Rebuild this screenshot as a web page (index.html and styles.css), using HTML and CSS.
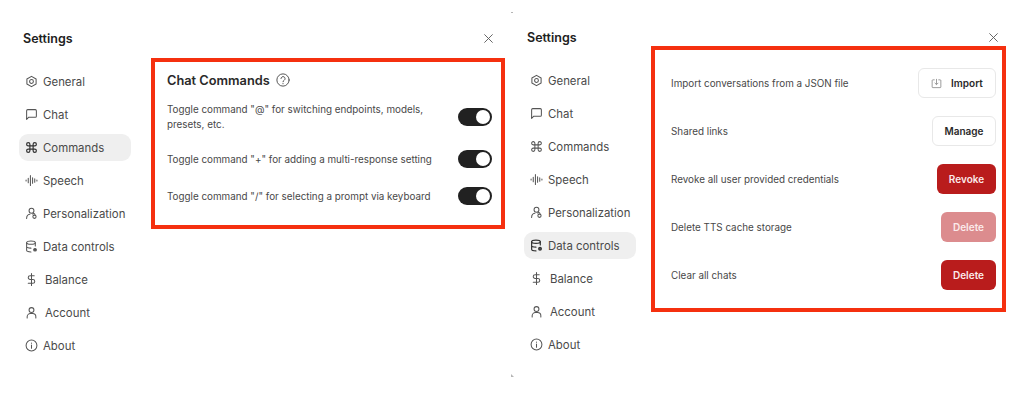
FILE: index.html
```html
<!DOCTYPE html>
<html lang="en">

<head>
    <meta charset="UTF-8">
    <meta name="viewport" content="width=device-width, initial-scale=1.0">
    <title>Settings</title>
    <link rel="stylesheet" href="styles.css">
</head>

<body>
    <svg class="icon-defs" width="0" height="0" aria-hidden="true">
        <symbol id="i-general" viewBox="0 0 24 24"><path d="M12 2.500l8.500 4.900v9.200L12 21.500l-8.500-4.900V7.400z"/><circle cx="12" cy="12" r="3.500"/></symbol>
        <symbol id="i-chat" viewBox="0 0 24 24"><path d="M21 15a2 2 0 0 1-2 2H7l-4 4V5a2 2 0 0 1 2-2h14a2 2 0 0 1 2 2z"/></symbol>
        <symbol id="i-commands" viewBox="0 0 24 24"><path d="M15 6v12a3 3 0 1 0 3-3H6a3 3 0 1 0 3 3V6a3 3 0 1 0-3 3h12a3 3 0 1 0-3-3"/></symbol>
        <symbol id="i-speech" viewBox="0 0 24 24"><path d="M2 11v2M6 8v8M10 3v18M14 7v10M18 9v6M22 11v2"/></symbol>
        <symbol id="i-person" viewBox="0 0 24 24"><circle cx="12" cy="7" r="4.500"/><path d="M3 21c0-4 2.500-7 6-7.500M14 13l2.500-1 2 1.500"/><circle cx="17.500" cy="18" r="3"/></symbol>
        <symbol id="i-data" viewBox="0 0 24 24"><ellipse cx="11" cy="5" rx="8" ry="3"/><path d="M3 5v14c0 1.700 3.500 3 8 3M19 5v6M3 12c0 1.700 3.500 3 8 3"/><circle cx="18.500" cy="18" r="2.500" class="icon-fill"/></symbol>
        <symbol id="i-balance" viewBox="0 0 24 24"><path d="M12 1v22M17 5H9.500a3.500 3.500 0 0 0 0 7h5a3.500 3.500 0 0 1 0 7H6"/></symbol>
        <symbol id="i-account" viewBox="0 0 24 24"><circle cx="12" cy="7.500" r="4.500"/><path d="M4 22v-2a6 6 0 0 1 6-6h4a6 6 0 0 1 6 6v2"/></symbol>
        <symbol id="i-about" viewBox="0 0 24 24"><circle cx="12" cy="12" r="10"/><path d="M12 11v6M12 7.500v.5"/></symbol>
        <symbol id="i-close" viewBox="0 0 24 24"><path d="M3 3l18 18M21 3L3 21"/></symbol>
        <symbol id="i-help" viewBox="0 0 24 24"><circle cx="12" cy="12" r="10.500"/><path d="M8.500 9.500a3.500 3.500 0 1 1 5.500 3c-1.200.8-2 1.300-2 2.500M12 18v.5"/></symbol>
        <symbol id="i-import" viewBox="0 0 24 24"><path d="M8 4H4a1.500 1.500 0 0 0-1.500 1.500v14A1.500 1.500 0 0 0 4 21h16a1.500 1.500 0 0 0 1.500-1.500v-14A1.500 1.500 0 0 0 20 4h-4M12 2v12M8 10.500l4 4 4-4"/></symbol>
    </svg>

    <span class="crop-mark crop-mark-top"></span>
    <span class="crop-mark crop-mark-bottom"></span>

    <div class="page">
        <!-- commands tab -->
        <section class="dialog dialog-commands">
            <div class="dialog-header">
                <h2 class="dialog-title">Settings</h2>
                <svg class="close-icon"><use href="#i-close"/></svg>
            </div>
            <div class="dialog-body">
                <nav class="nav">
                    <a class="nav-item"><svg class="icon"><use href="#i-general"/></svg>General</a>
                    <a class="nav-item"><svg class="icon"><use href="#i-chat"/></svg>Chat</a>
                    <a class="nav-item active"><svg class="icon"><use href="#i-commands"/></svg>Commands</a>
                    <a class="nav-item"><svg class="icon"><use href="#i-speech"/></svg>Speech</a>
                    <a class="nav-item"><svg class="icon"><use href="#i-person"/></svg>Personalization</a>
                    <a class="nav-item"><svg class="icon"><use href="#i-data"/></svg>Data controls</a>
                    <a class="nav-item wide"><svg class="icon"><use href="#i-balance"/></svg>Balance</a>
                    <a class="nav-item wide"><svg class="icon"><use href="#i-account"/></svg>Account</a>
                    <a class="nav-item"><svg class="icon"><use href="#i-about"/></svg>About</a>
                </nav>
                <div class="panel panel-commands">
                    <div class="panel-heading">
                        <h3 class="panel-title">Chat Commands</h3>
                        <svg class="help-icon"><use href="#i-help"/></svg>
                    </div>
                    <div class="toggle-row">
                        <p class="row-text">Toggle command "@" for switching endpoints, models, presets, etc.</p>
                        <span class="toggle"><span class="toggle-knob"></span></span>
                    </div>
                    <div class="toggle-row toggle-row-spaced">
                        <p class="row-text">Toggle command "+" for adding a multi-response setting</p>
                        <span class="toggle"><span class="toggle-knob"></span></span>
                    </div>
                    <div class="toggle-row">
                        <p class="row-text">Toggle command "/" for selecting a prompt via keyboard</p>
                        <span class="toggle"><span class="toggle-knob"></span></span>
                    </div>
                </div>
            </div>
        </section>

        <!-- data controls tab -->
        <section class="dialog dialog-data">
            <div class="dialog-header">
                <h2 class="dialog-title">Settings</h2>
                <svg class="close-icon"><use href="#i-close"/></svg>
            </div>
            <div class="dialog-body">
                <nav class="nav">
                    <a class="nav-item"><svg class="icon"><use href="#i-general"/></svg>General</a>
                    <a class="nav-item"><svg class="icon"><use href="#i-chat"/></svg>Chat</a>
                    <a class="nav-item"><svg class="icon"><use href="#i-commands"/></svg>Commands</a>
                    <a class="nav-item"><svg class="icon"><use href="#i-speech"/></svg>Speech</a>
                    <a class="nav-item"><svg class="icon"><use href="#i-person"/></svg>Personalization</a>
                    <a class="nav-item active"><svg class="icon"><use href="#i-data"/></svg>Data controls</a>
                    <a class="nav-item wide"><svg class="icon"><use href="#i-balance"/></svg>Balance</a>
                    <a class="nav-item wide"><svg class="icon"><use href="#i-account"/></svg>Account</a>
                    <a class="nav-item"><svg class="icon"><use href="#i-about"/></svg>About</a>
                </nav>
                <div class="panel panel-data">
                    <div class="data-row">
                        <p class="row-text">Import conversations from a JSON file</p>
                        <button class="btn btn-outline btn-import"><svg class="btn-icon"><use href="#i-import"/></svg>Import</button>
                    </div>
                    <div class="data-row">
                        <p class="row-text">Shared links</p>
                        <button class="btn btn-outline btn-manage">Manage</button>
                    </div>
                    <div class="data-row">
                        <p class="row-text">Revoke all user provided credentials</p>
                        <button class="btn btn-danger btn-revoke">Revoke</button>
                    </div>
                    <div class="data-row">
                        <p class="row-text">Delete TTS cache storage</p>
                        <button class="btn btn-danger btn-delete" disabled>Delete</button>
                    </div>
                    <div class="data-row">
                        <p class="row-text">Clear all chats</p>
                        <button class="btn btn-danger btn-delete">Delete</button>
                    </div>
                </div>
            </div>
        </section>
    </div>
</body>

</html>
```

FILE: styles.css
```css
html,
body {
    margin: 0;
    overflow: hidden;
    height: 100%;
    width: 100%;
    background-color: #fff;
}

body {
    font-family: "Inter", "Liberation Sans", sans-serif;
    color: #424242;
}

.icon-defs {
    display: block;
}

.crop-mark {
    position: absolute;
    left: 511px;
    width: 3px;
    height: 3px;
    background-color: #b5b5b5;
}

.crop-mark-top {
    top: 12px;
    height: 1px;
    width: 2px;
}

.crop-mark-bottom {
    top: 374px;
    clip-path: polygon(0 0, 100% 100%, 0 100%);
}

.page {
    display: flex;
}

.dialog {
    flex: none;
    box-sizing: border-box;
    width: 505px;
    padding-left: 19px;
}

.dialog-commands {
    padding-top: 29px;
}

.dialog-data {
    padding-top: 28px;
}

.dialog-header {
    display: flex;
    justify-content: space-between;
    align-items: center;
    height: 18px;
    padding-left: 4px;
    padding-right: 11px;
}

.dialog-data .dialog-header {
    padding-left: 3px;
}

.dialog-title {
    margin: 0;
    font-size: 12.5px;
    font-weight: 600;
    color: #212121;
}

.close-icon {
    width: 11px;
    height: 11px;
    fill: none;
    stroke: #5a5a5a;
    stroke-width: 2;
}

.dialog-body {
    display: flex;
    align-items: flex-start;
}

.nav {
    flex: none;
    display: flex;
    flex-direction: column;
    gap: 6px;
    width: 112px;
    padding-top: 21px;
}

.nav-item {
    display: flex;
    align-items: center;
    gap: 5px;
    height: 27px;
    padding-left: 6px;
    border-radius: 9px;
    font-size: 11.4px;
    color: #4a4a4a;
}

.nav-item.wide {
    gap: 7px;
}

.nav-item.active {
    background-color: #efefef;
}

.icon {
    flex: none;
    width: 13px;
    height: 13px;
    fill: none;
    stroke: #555;
    stroke-width: 1.9;
    stroke-linecap: round;
    stroke-linejoin: round;
}

.nav-item.active .icon {
    stroke: #333;
    stroke-width: 2.2;
}

.icon-fill {
    fill: #555;
}

.panel {
    box-sizing: border-box;
    width: 355px;
    border: 4px solid #f5300f;
}

.panel-commands {
    margin-left: 20px;
    margin-top: 11px;
    padding: 9px 9px 20px 12px;
}

.panel-data {
    display: flex;
    flex-direction: column;
    gap: 18px;
    margin-left: 15px;
    padding: 18px 6px 18px 16px;
}

.panel-heading {
    display: flex;
    align-items: center;
    gap: 6px;
    height: 18px;
    margin-bottom: 13px;
}

.panel-title {
    margin: 0;
    font-size: 12.8px;
    font-weight: 600;
    color: #2a2a2a;
}

.help-icon {
    width: 14px;
    height: 14px;
    fill: none;
    stroke: #4a4a4a;
    stroke-width: 1.6;
    stroke-linecap: round;
}

.toggle-row {
    display: flex;
    justify-content: space-between;
    align-items: center;
    margin-bottom: 18px;
}

.toggle-row-spaced {
    margin-bottom: 19px;
}

.toggle-row:last-child {
    margin-bottom: 0;
}

.row-text {
    margin: 0;
    max-width: 270px;
    font-size: 9.85px;
    line-height: 15px;
    color: #484848;
}

.toggle {
    flex: none;
    display: flex;
    justify-content: flex-end;
    align-items: center;
    box-sizing: border-box;
    width: 34px;
    height: 18px;
    padding-right: 2px;
    border-radius: 9px;
    background-color: #212121;
}

.toggle-knob {
    width: 14px;
    height: 14px;
    border-radius: 50%;
    background-color: #fff;
}

.data-row {
    display: flex;
    justify-content: space-between;
    align-items: center;
    height: 30px;
}

.btn {
    display: flex;
    justify-content: center;
    align-items: center;
    box-sizing: border-box;
    height: 30px;
    padding: 0;
    border-radius: 6px;
    font-family: inherit;
    font-size: 10px;
    font-weight: 600;
}

.btn-outline {
    border: 1px solid #e8e8e8;
    background-color: #fff;
    color: #2a2a2a;
}

.btn-danger {
    border: none;
    background-color: #b91c1c;
    color: #fbeaea;
}

.btn-danger:disabled {
    background-color: #dc8c8e;
}

.btn-import {
    gap: 9px;
    width: 78px;
}

.btn-manage {
    width: 64px;
}

.btn-revoke {
    width: 59px;
}

.btn-delete {
    width: 55px;
}

.btn-icon {
    width: 11px;
    height: 11px;
    fill: none;
    stroke: #777;
    stroke-width: 1.6;
}
```
